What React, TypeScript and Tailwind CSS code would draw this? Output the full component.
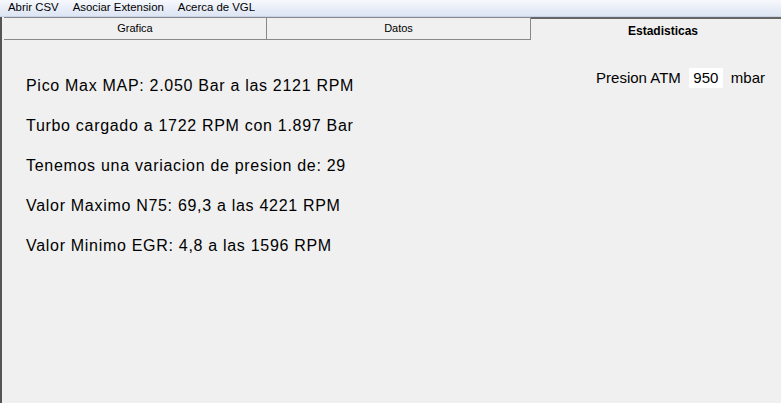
export default function App() {
  const stats = [
    'Pico Max MAP: 2.050 Bar a las 2121 RPM',
    'Turbo cargado a 1722 RPM con 1.897 Bar',
    'Tenemos una variacion de presion de: 29',
    'Valor Maximo N75: 69,3 a las 4221 RPM',
    'Valor Minimo EGR: 4,8 a las 1596 RPM',
  ];

  return (
    <div className="w-[781px] h-[403px] overflow-hidden bg-[#f0f0f0] flex flex-col font-['Liberation_Sans',Arial,sans-serif] text-black">
      {/* Menu bar */}
      <div className="h-[17px] flex items-center gap-[14px] pl-[8px] text-[11.4px] bg-gradient-to-b from-[#f6f8fc] to-[#dde5f4] border-b border-[#c9d3e6] shrink-0">
        <span>Abrir CSV</span>
        <span>Asociar Extension</span>
        <span>Acerca de VGL</span>
      </div>

      {/* Tabs */}
      <div className="flex h-[23px] shrink-0 pl-[2px] text-[11px] border-l-2 border-[#555]">
        <div className="w-[263px] flex items-center justify-center border-t border-r border-b border-[#888] bg-[#f0f0f0]">
          Grafica
        </div>
        <div className="w-[264px] flex items-center justify-center border-t border-r border-b border-[#888] bg-[#f0f0f0]">
          Datos
        </div>
        <div className="flex-1 flex items-center justify-center font-bold text-[12px] border-t-2 border-[#666] pt-[3px] pl-[14px]">
          Estadisticas
        </div>
      </div>

      {/* Content */}
      <div className="flex-1 border-l-2 border-[#555] flex justify-between pt-[24px]">
        <div className="flex flex-col gap-[21px] pl-[24px] pt-[12px] text-[16px] leading-[19px] tracking-[0.7px]">
          {stats.map((s) => (
            <div key={s}>{s}</div>
          ))}
        </div>
        <div className="flex items-start gap-[8px] pr-[16px] pt-[4px] text-[15px] leading-[18px]">
          <span className="mt-[1px]">Presion ATM</span>
          <span className="bg-white w-[34px] h-[20px] flex items-center justify-center">950</span>
          <span className="mt-[1px]">mbar</span>
        </div>
      </div>
    </div>
  );
}
